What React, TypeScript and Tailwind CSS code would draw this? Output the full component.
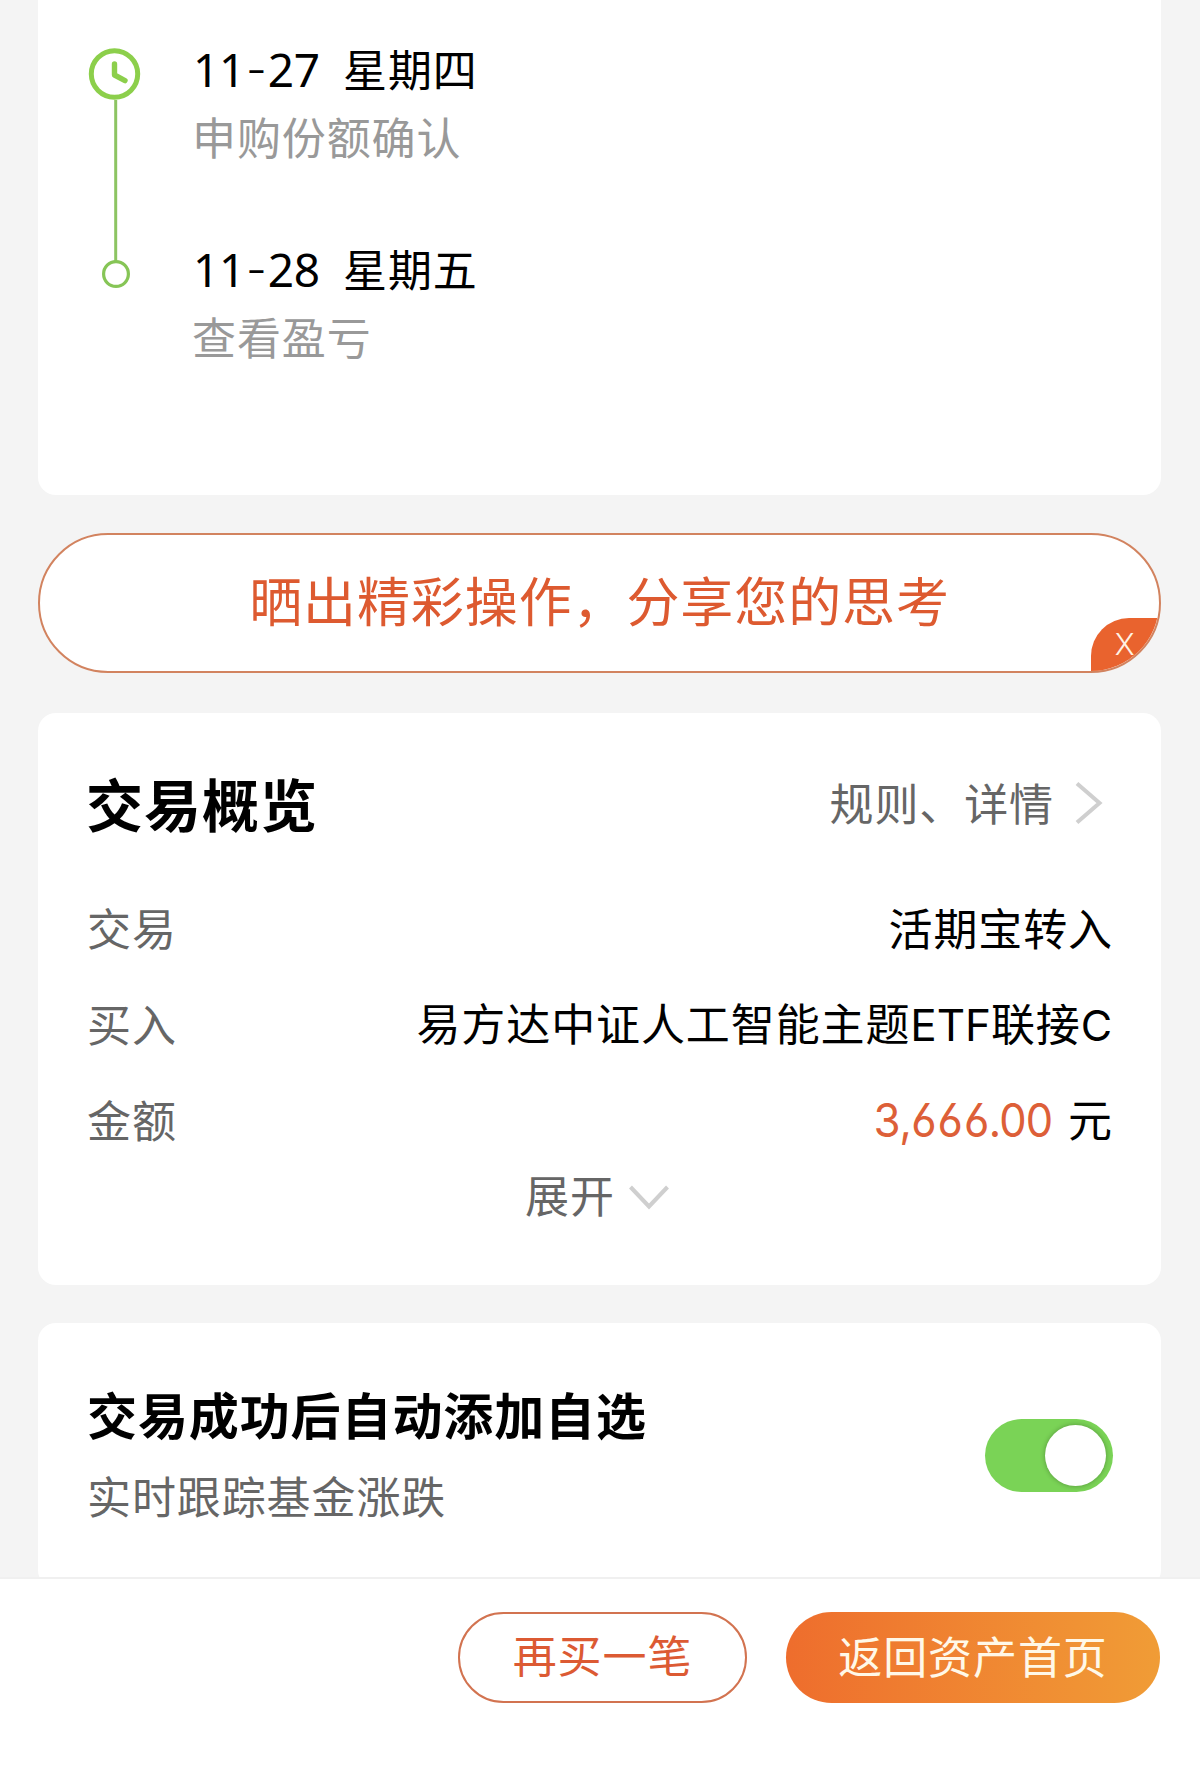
import type { ReactNode } from "react";

const steps = [
  { month: "11", day: "27", weekday: "星期四", label: "申购份额确认" },
  { month: "11", day: "28", weekday: "星期五", label: "查看盈亏" },
];

function Row({ label, children }: { label: string; children: ReactNode }) {
  return (
    <div className="flex h-24 items-center justify-between">
      <span className="text-[#666666]">{label}</span>
      <span className="-mr-px text-black">{children}</span>
    </div>
  );
}

function Timeline() {
  return (
    <section className="flex h-[495px] rounded-b-[18px] bg-white pl-[50px]">
      <svg className="mt-[46px] h-[246px] w-[56px] shrink-0" viewBox="0 0 56 246" fill="none">
        <path d="M27.7 54v161" stroke="#8cc462" strokeWidth="3" />
        <circle cx="26.5" cy="28" r="23.2" stroke="#8ccf4b" strokeWidth="5" />
        <path d="M26.5 18v11l10.5 5.6" stroke="#8ccf4b" strokeWidth="5.4" strokeLinecap="round" strokeLinejoin="round" />
        <circle cx="28" cy="228" r="12.4" stroke="#86c556" strokeWidth="3.2" />
      </svg>
      <div className="pt-[35px] pl-12">
        {steps.map((step) => (
          <div key={step.day} className="h-[200px]">
            <div className="flex h-[68px] items-center text-black">
              <span className="flex w-[151px] pl-px font-['Noto_Sans'] text-[46px] tracking-[-0.4px]">
                {step.month}
                <span className="w-[23px] text-center font-['Inter'] font-light">-</span>
                {step.day}
              </span>
              <span className="-mt-0.5">{step.weekday}</span>
            </div>
            <div className="h-[66px] leading-[66px] text-[#999999]">{step.label}</div>
          </div>
        ))}
      </div>
    </section>
  );
}

function ShareBanner() {
  return (
    <section className="relative mt-[38px] flex h-[140px] items-center justify-center overflow-hidden rounded-full border-2 border-[#d2835f] bg-white">
      <span className="pb-[9px] text-[53px] leading-[64px] tracking-[0.9px] text-[#dd5a30]">晒出精彩操作，分享您的思考</span>
      <button className="absolute right-0 bottom-0 flex h-[53px] w-[68px] items-center justify-center rounded-tl-[38px] bg-[#e9632e] pb-px font-['Inter'] text-[30px] font-light text-[#fff3e4]">
        X
      </button>
    </section>
  );
}

function Overview() {
  return (
    <section className="mt-10 h-[572px] rounded-[18px] bg-white px-[49px] pt-[41px]">
      <div className="flex h-24 items-center justify-between">
        <h2 className="-ml-px text-[57px] leading-[76px] font-bold tracking-[1px] text-black">交易概览</h2>
        <div className="flex items-center text-[#666666]">
          <span>规则、详情</span>
          <svg className="mr-2 ml-5 h-[45px] w-[30px]" viewBox="0 0 30 45" fill="none">
            <path d="M3 3.500 25.500 23 3 42.500" stroke="#cfcfcf" strokeWidth="4" />
          </svg>
        </div>
      </div>
      <div className="mt-[29px]">
        <Row label="交易">活期宝转入</Row>
        <Row label="买入">
          易方达中证人工智能主题<span className="font-['Inter'] tracking-[-0.1px]">ETF</span>联接
          <span className="font-['Inter'] text-[43px]">C</span>
        </Row>
        <Row label="金额">
          <span className="mr-4 inline-block origin-right scale-x-[0.95] font-['Inter'] text-[46px] tracking-[-2px] text-[#dd5f38] [font-feature-settings:'cv03','tnum']">
            3,666.00
          </span>
          元
        </Row>
      </div>
      <div className="-mt-px flex h-14 items-center pl-[438px] text-[#666666]">
        <span>展开</span>
        <svg className="mt-2 ml-[13px] h-[28px] w-[42px]" viewBox="0 0 42 28" fill="none">
          <path d="M2.500 3 21 22.500 39.500 3" stroke="#cfcfcf" strokeWidth="4" />
        </svg>
      </div>
    </section>
  );
}

function AutoFollow() {
  return (
    <section className="mt-[38px] flex h-[265px] justify-between rounded-[18px] bg-white pr-12 pl-[49px]">
      <div className="pt-[60px]">
        <h3 className="text-[50px] leading-[60px] font-bold tracking-[0.9px] text-black">交易成功后自动添加自选</h3>
        <p className="mt-[22px] leading-[60px] text-[#666666]">实时跟踪基金涨跌</p>
      </div>
      <button className="mt-24 flex h-[73px] w-[128px] items-center justify-end rounded-full bg-[#7ad356] pr-[7px]">
        <span className="h-[61px] w-[61px] rounded-full bg-white shadow-[0_0_5px_rgba(0,0,0,0.3)]" />
      </button>
    </section>
  );
}

export default function App() {
  return (
    <div className="h-[1779px] w-[1200px] overflow-hidden bg-[#f4f4f4] font-['Noto_Sans_CJK_SC',sans-serif] text-[44px] leading-[60px] tracking-[0.9px] whitespace-nowrap">
      <main className="h-[1577px] overflow-hidden pr-[39px] pl-[38px]">
        <Timeline />
        <ShareBanner />
        <Overview />
        <AutoFollow />
      </main>
      <footer className="flex h-[202px] justify-end gap-[39px] border-t-2 border-[#f0f0f0] bg-white pt-[33px] pr-10">
        <button className="h-[91px] w-[289px] rounded-full border-2 border-[#d27350] pb-[7px] text-[#dc5a33]">再买一笔</button>
        <button className="h-[91px] w-[374px] rounded-full bg-linear-to-r from-[#ee6d2d] to-[#f09c36] pb-[5px] text-[#fff8e8]">返回资产首页</button>
      </footer>
    </div>
  );
}
